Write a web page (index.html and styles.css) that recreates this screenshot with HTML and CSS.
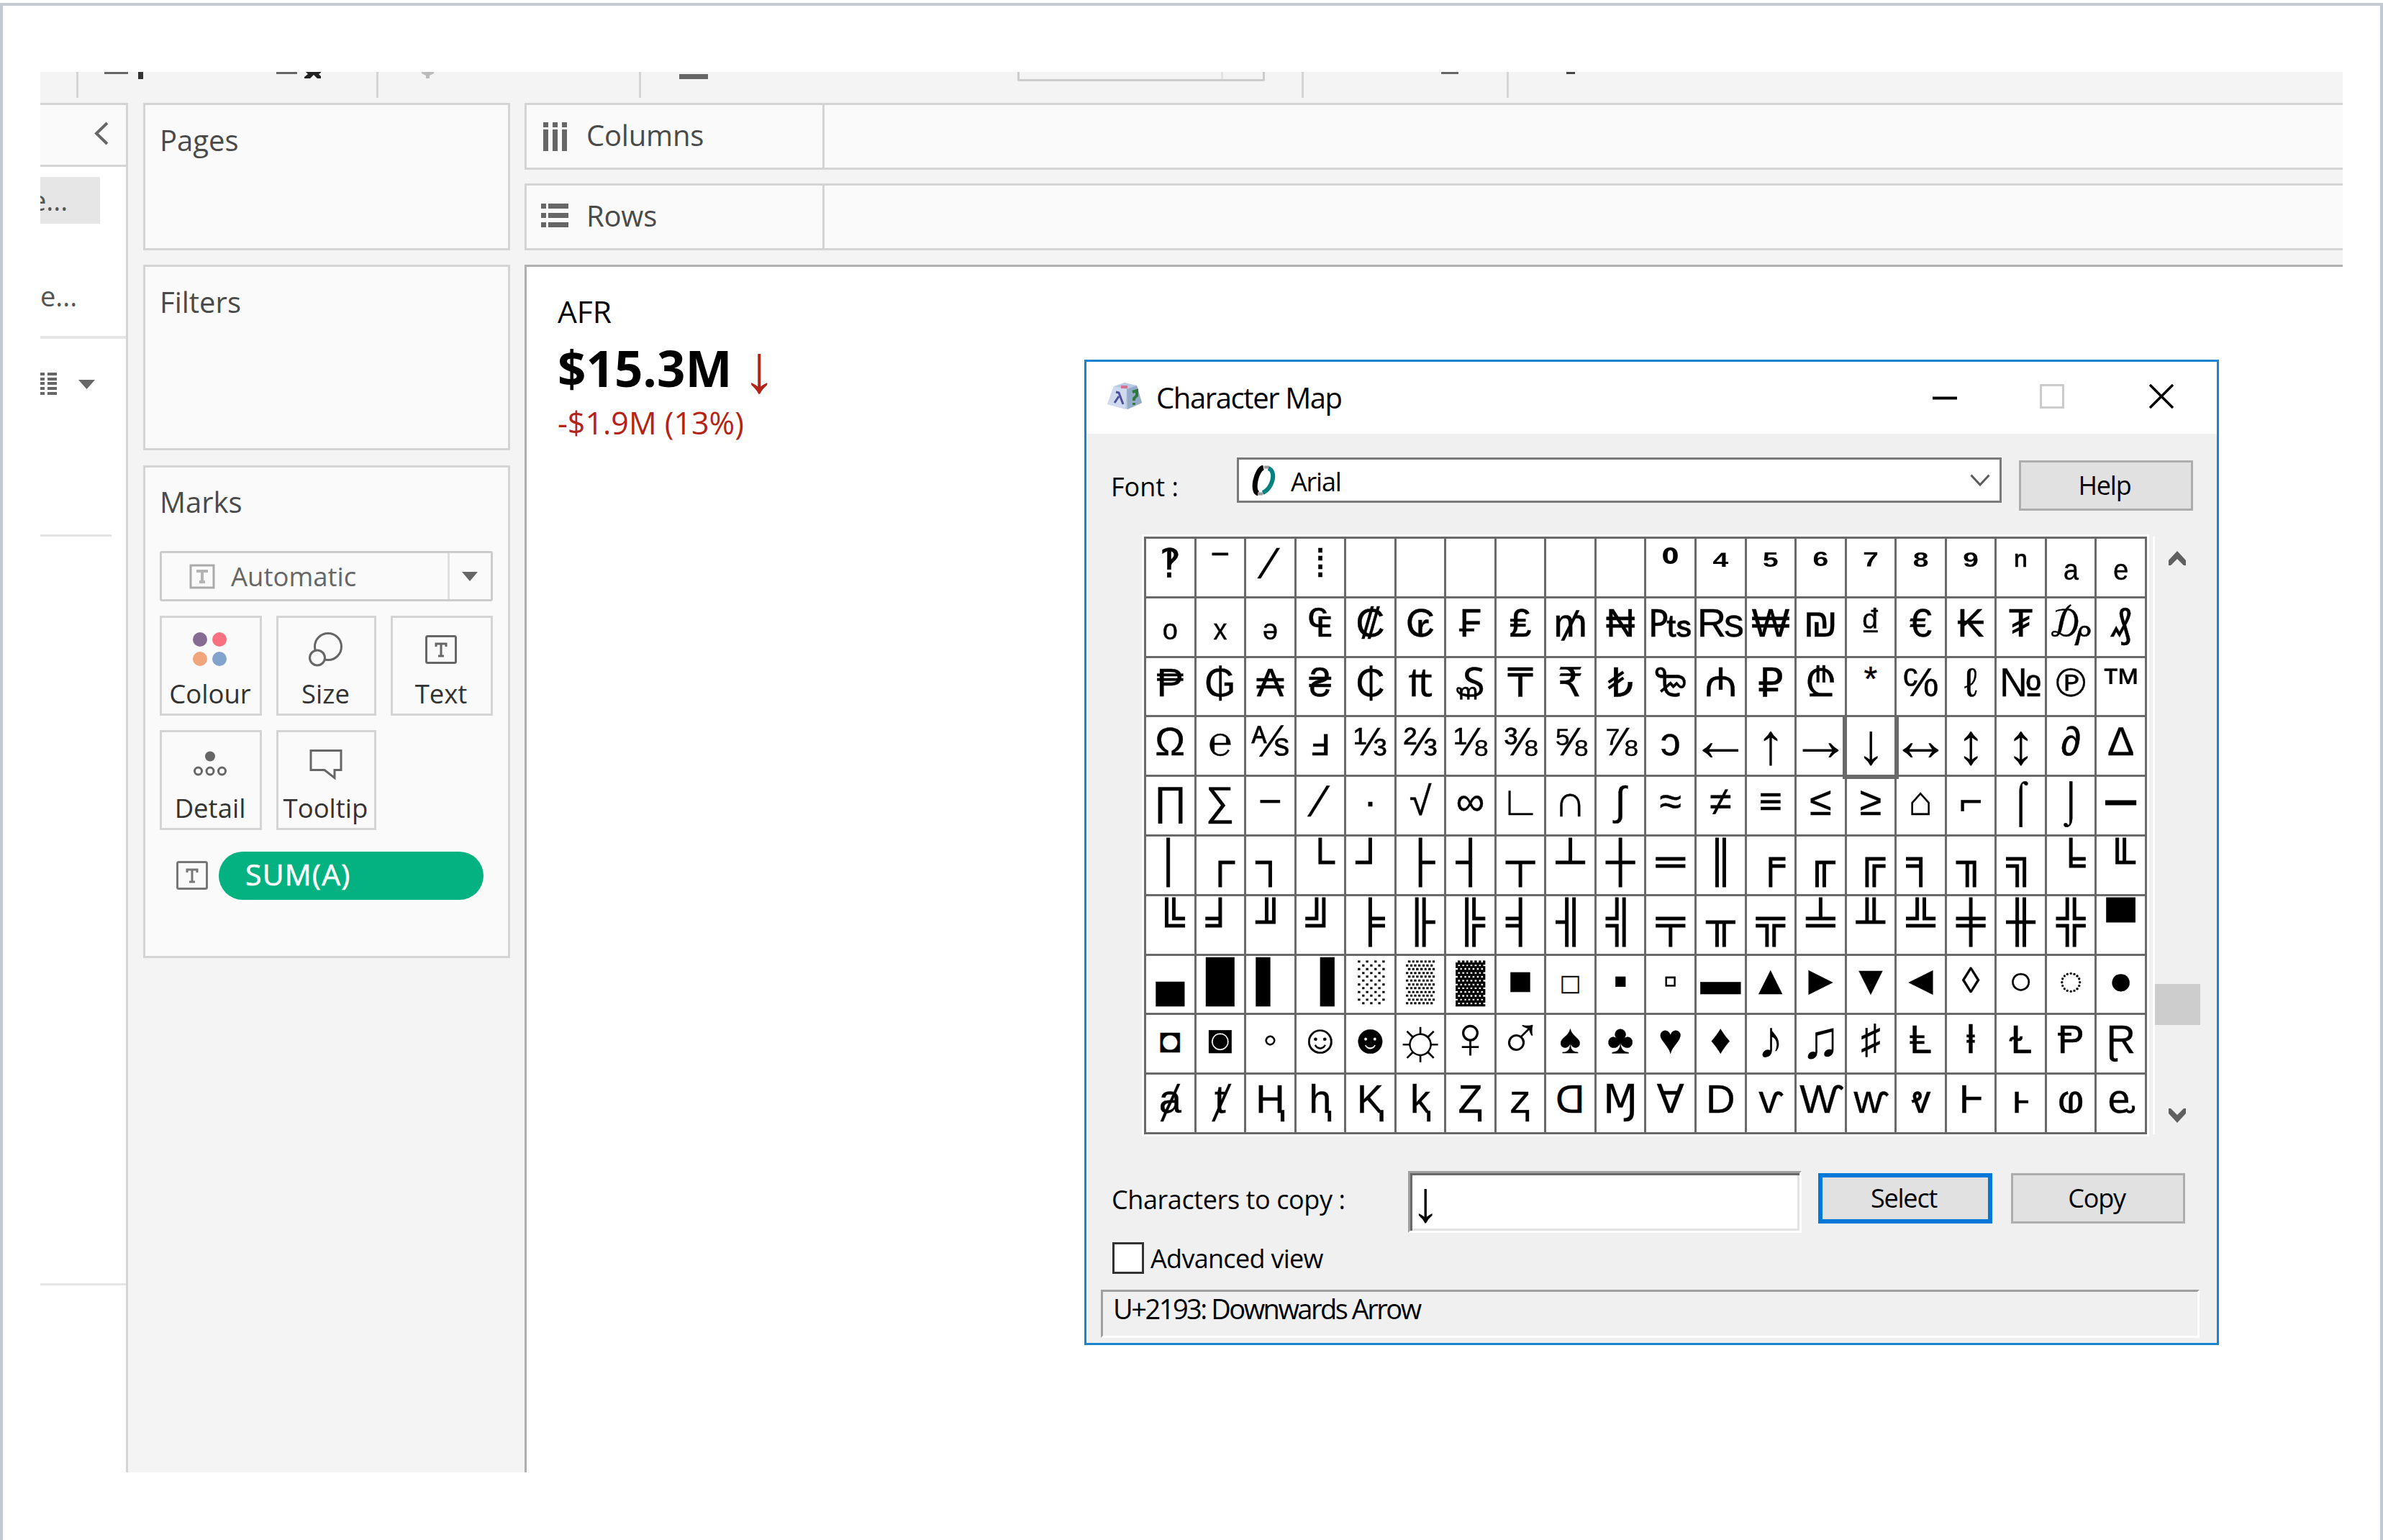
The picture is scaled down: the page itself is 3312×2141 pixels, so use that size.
FILE: index.html
```html
<!DOCTYPE html>
<html lang="en">
<head>
<meta charset="utf-8">
<title>Worksheet with Character Map</title>
<link rel="stylesheet" href="styles.css">
</head>
<body>
<div class="frame">
<main class="app">
  <div class="toolbar">
    <i class="sep t1"></i>
    <svg class="t2" width="54" height="10"><path fill="#666" d="M0 0h33v3H0z"/><path fill="#333" d="M47 0h7v10h-7z"/></svg>
    <svg class="t3" width="62" height="10"><path fill="#666" d="M0 0h29v3H0z"/><path fill="#222" d="M41 0h21v1l-3 2 4 4v2h-6l-5-5-5 5h-8V7l5-4z"/></svg>
    <i class="sep t4"></i>
    <svg class="t5" width="17" height="9"><path fill="#bbb" d="M0 0h17v2l-6 3v4H6V5L0 2z"/></svg>
    <i class="sep t6"></i>
    <i class="dash t7"></i>
    <div class="tb-select t8"></div>
    <i class="sep t9"></i>
    <i class="stub t10"></i>
    <i class="sep t11"></i>
    <i class="stub dark t12"></i>
  </div>
  <div class="work">
    <aside class="data">
      <div class="data-head"><svg width="22" height="33"><path d="M19 2 4 16.500 19 31" fill="none" stroke="#666" stroke-width="4"/></svg></div>
      <div class="source selected"><span>e...</span></div>
      <div class="source"><span>e...</span></div>
      <div class="tools">
        <svg width="77" height="31"><g fill="#666"><path d="M0 0h6v4H0zM0 7h6v4H0zM0 13h6v4H0zM0 20h6v4H0zM0 27h6v4H0zM10 0h13v4H10zM10 7h13v4H10zM10 13h13v4H10zM10 20h13v4H10zM10 27h13v4H10zM53 10h23L64.500 23z"/></g></svg>
      </div>
      <div class="fields"></div>
      <div class="params"></div>
    </aside>
    <section class="shelves">
      <div class="card pages">Pages</div>
      <div class="card filters">Filters</div>
      <div class="card marks">
        <div class="marks-title">Marks</div>
        <div class="mark-type">
          <svg width="38" height="35" viewBox="0 0 38 35"><path d="M3 2h32v31H3z" fill="none" stroke="#aaa" stroke-width="3"/><path d="M11 10h16M19 10v15M15 25h8" stroke="#b4b4b4" stroke-width="4" fill="none"/></svg>
          <span>Automatic</span>
          <b><svg width="22" height="13"><path d="M0 0h22L11 13z" fill="#666"/></svg></b>
        </div>
        <div class="tiles">
          <div class="tile"><svg width="48" height="48"><circle cx="10" cy="10" r="10" fill="#866c93"/><circle cx="37" cy="10" r="10" fill="#f97080"/><circle cx="10" cy="37" r="10" fill="#f2a47b"/><circle cx="37" cy="37" r="10" fill="#82a3cb"/></svg><span>Colour</span></div>
          <div class="tile"><svg width="48" height="48" fill="none" stroke="#666" stroke-width="3"><circle cx="27" cy="20" r="18.500"/><circle cx="12" cy="35.500" r="10.500" fill="#fafafa"/></svg><span>Size</span></div>
          <div class="tile"><svg width="44" height="48"><rect x="1.500" y="5.500" width="41" height="37" rx="2" fill="none" stroke="#666" stroke-width="3"/><path d="M15 20v-4h14v4M22 16v17M18 33h8" fill="none" stroke="#666" stroke-width="3"/></svg><span>Text</span></div>
          <div class="tile"><svg width="48" height="48" fill="none" stroke="#666" stroke-width="3"><circle cx="24" cy="13.500" r="7" fill="#666" stroke="none"/><circle cx="7.500" cy="34" r="5"/><circle cx="24" cy="34" r="5"/><circle cx="40.500" cy="34" r="5"/></svg><span>Detail</span></div>
          <div class="tile"><svg width="48" height="48"><path d="M3 5.500h42v27H36v11L22 32.500H3z" fill="none" stroke="#666" stroke-width="3"/></svg><span>Tooltip</span></div>
        </div>
        <div class="pill-row">
          <svg width="44" height="41"><rect x="1.500" y="1.500" width="41" height="37" rx="2" fill="none" stroke="#777" stroke-width="3"/><path d="M15 16v-4h14v4M22 12v17M18 29h8" fill="none" stroke="#777" stroke-width="3"/></svg>
          <span class="pill">SUM(A)</span>
        </div>
      </div>
    </section>
    <section class="view">
      <div class="shelf"><div class="shelf-name"><svg width="40" height="40"><path fill="#666" d="M4 0h7v7H4zM17 0h7v7h-7zM30 0h7v7h-7zM4 10h7v30H4zM17 10h7v30h-7zM30 10h7v30h-7z"/></svg><span>Columns</span></div></div>
      <div class="shelf"><div class="shelf-name"><svg width="40" height="40"><path fill="#666" d="M1 1h7v7H1zM1 14h7v7H1zM1 27h7v7H1zM11 1h28v7H11zM11 14h28v7H11zM11 27h28v7H11z"/></svg><span>Rows</span></div></div>
      <div class="sheet">
        <div class="kpi-name">AFR</div>
        <div class="kpi-value">$15.3M<span class="kpi-arrow">↓</span></div>
        <div class="kpi-delta">-$1.9M (13%)</div>
      </div>
    </section>
  </div>

  <div class="dialog">
    <header class="titlebar">
      <svg class="app-icon" width="48" height="38" viewBox="0 0 48 38"><path d="M9 5 24 0l17 4 7 24-20 9L0 30z" fill="#b9c9e2"/><path d="M9 5 27 9 25 37 0 30z" fill="#cfdaee"/><path d="M27 9l14-5 7 24-20 9z" fill="#93abc9"/><path d="M19 4h9v4h-9z" fill="#d0708c"/><path d="M12 13l4 1 6 16M16 19l-6 9" stroke="#4b4f9e" stroke-width="3" fill="none"/><path d="M35 13l6-2v7l-4 4v3M37 28v3" stroke="#2c7a3c" stroke-width="4" fill="none"/></svg>
      <h1>Character Map</h1>
      <div class="window-buttons">
        <svg width="34" height="34"><path d="M0 19.500h34" stroke="#000" stroke-width="4"/></svg>
        <svg width="34" height="34"><path d="M1.500 1.500h31v31h-31z" fill="none" stroke="#ccc" stroke-width="3"/></svg>
        <svg width="34" height="34"><path d="M1 1l32 32M33 1 1 33" stroke="#000" stroke-width="3.500"/></svg>
      </div>
    </header>
    <div class="font-row">
      <label>Font :</label>
      <div class="combo"><svg width="38" height="42" viewBox="0 0 38 42"><path d="M17 3C7 5 0 37 10 39" fill="none" stroke="#000" stroke-width="7"/><path d="M9 39.500h7M18 2.500h7" stroke="#999" stroke-width="4"/><path d="M24 4c12 5 5 29-8 34" fill="none" stroke="#008080" stroke-width="6"/></svg><span>Arial</span><svg class="chev" width="28" height="18"><path d="M1.500 1.500 14 15 26.500 1.500" fill="none" stroke="#5c5c5c" stroke-width="3"/></svg></div>
      <button class="btn">Help</button>
    </div>
    <div class="map-row">
      <div class="grid">
        <span>‽</span><span class="overline">‾</span><span class="slash">⁄</span><span>⁞</span><span></span><span></span><span></span><span></span><span></span><span></span><span class="sup">⁰</span><span class="sup">⁴</span><span class="sup">⁵</span><span class="sup">⁶</span><span class="sup">⁷</span><span class="sup">⁸</span><span class="sup">⁹</span><span>ⁿ</span><span>ₐ</span><span>ₑ</span>
        <span>ₒ</span><span>ₓ</span><span>ₔ</span><span>₠</span><span>₡</span><span>₢</span><span>₣</span><span>₤</span><span>₥</span><span>₦</span><span>₧</span><span>₨</span><span>₩</span><span>₪</span><span>₫</span><span>€</span><span>₭</span><span>₮</span><span>₯</span><span>₰</span>
        <span>₱</span><span>₲</span><span>₳</span><span>₴</span><span>₵</span><span>₶</span><span>₷</span><span>₸</span><span>₹</span><span>₺</span><span>₻</span><span>₼</span><span>₽</span><span>₾</span><span class="star">*</span><span>℅</span><span>ℓ</span><span>№</span><span>℗</span><span>™</span>
        <span>Ω</span><span>℮</span><span>⅍</span><span>ⅎ</span><span>⅓</span><span>⅔</span><span>⅛</span><span>⅜</span><span>⅝</span><span>⅞</span><span>ↄ</span><span class="harrow">←</span><span class="varrow">↑</span><span class="harrow">→</span><span class="varrow current">↓</span><span class="harrow">↔</span><span class="varrow">↕</span><span class="varrow">↕</span><span>∂</span><span>∆</span>
        <span>∏</span><span>∑</span><span>−</span><span class="slash">∕</span><span>∙</span><span>√</span><span>∞</span><span>∟</span><span class="wide">∩</span><span>∫</span><span>≈</span><span>≠</span><span>≡</span><span>≤</span><span>≥</span><span>⌂</span><span>⌐</span><span>⌠</span><span>⌡</span><span class="heavy">─</span>
        <span class="line">│</span><span class="line">┌</span><span class="line">┐</span><span class="line">└</span><span class="line">┘</span><span class="line">├</span><span class="line">┤</span><span class="line">┬</span><span class="line">┴</span><span class="line">┼</span><span class="line">═</span><span class="line">║</span><span class="line">╒</span><span class="line">╓</span><span class="line">╔</span><span class="line">╕</span><span class="line">╖</span><span class="line">╗</span><span class="line">╘</span><span class="line">╙</span>
        <span class="line">╚</span><span class="line">╛</span><span class="line">╜</span><span class="line">╝</span><span class="line">╞</span><span class="line">╟</span><span class="line">╠</span><span class="line">╡</span><span class="line">╢</span><span class="line">╣</span><span class="line">╤</span><span class="line">╥</span><span class="line">╦</span><span class="line">╧</span><span class="line">╨</span><span class="line">╩</span><span class="line">╪</span><span class="line">╫</span><span class="line">╬</span><span class="line">▀</span>
        <span>▄</span><span>█</span><span>▌</span><span>▐</span><span>░</span><span>▒</span><span>▓</span><span>■</span><span class="small">□</span><span>▪</span><span>▫</span><span>▬</span><span>▲</span><span>►</span><span>▼</span><span>◄</span><span class="lozenge">◊</span><span>○</span><span>◌</span><span>●</span>
        <span class="inverse">◘</span><span>◙</span><span>◦</span><span>☺</span><span>☻</span><span class="sign">☼</span><span class="sign">♀</span><span class="sign">♂</span><span>♠</span><span>♣</span><span>♥</span><span>♦</span><span class="note">♪</span><span class="note">♫</span><span>♯</span><span>Ⱡ</span><span>ⱡ</span><span>Ɫ</span><span>Ᵽ</span><span>Ɽ</span>
        <span>ⱥ</span><span>ⱦ</span><span>Ⱨ</span><span>ⱨ</span><span>Ⱪ</span><span>ⱪ</span><span>Ⱬ</span><span>ⱬ</span><span class="turned"><b>D</b></span><span>Ɱ</span><span>Ɐ</span><span>D</span><span>ⱱ</span><span>Ⱳ</span><span>ⱳ</span><span>ⱴ</span><span>Ⱶ</span><span>ⱶ</span><span>ⱷ</span><span>ⱸ</span>
      </div>
      <div class="scroll">
        <svg width="24" height="20"><path d="M12 0 24 13v7h-3l-9-9-9 9H0v-7z" fill="#606060"/></svg>
        <i class="thumb"></i>
        <svg width="24" height="20"><path d="M12 20 24 7V0h-3l-9 9-9-9H0v7z" fill="#606060"/></svg>
      </div>
    </div>
    <div class="copy-row">
      <label>Characters to copy :</label>
      <div class="input">↓</div>
      <button class="btn primary">Select</button>
      <button class="btn">Copy</button>
    </div>
    <div class="check-row"><i class="box"></i><span>Advanced view</span></div>
    <footer class="status">U+2193: Downwards Arrow</footer>
  </div>
</main>
</div>
</body>
</html>
```
FILE: styles.css
```css
* { box-sizing: border-box; }
body {
  margin: 0;
  padding-top: 4px;
  background: #fff;
  font-family: "Open Sans", "Noto Sans", sans-serif;
  color: #444;
}
svg { display: block; flex: none; }
i { display: block; flex: none; font-style: normal; }
.frame {
  height: 2137px;
  border: 4px solid #c5c9d2;
  border-bottom: 0;
  padding: 92px 0 0 52px;
  overflow: hidden;
}
.app {
  position: relative;
  width: 3200px;
  height: 1947px;
  background: #f4f4f4;
  overflow: hidden;
}

/* toolbar remnants */
.toolbar { display: flex; align-items: flex-start; height: 43px; }
.sep { width: 3px; height: 36px; background: #d4d4d4; }
.dash { width: 40px; height: 7px; margin-top: 3px; background: #666; }
.stub { width: 24px; height: 3px; background: #666; }
.stub.dark { width: 12px; background: #444; }
.tb-select {
  width: 344px; height: 13px;
  border: 3px solid #ccc; border-top: 0; border-radius: 0 0 3px 3px;
  background: linear-gradient(#e4e4e4, #e4e4e4) 280px 0 / 3px 10px no-repeat;
}
.t1 { margin-left: 50px; }
.t2 { margin-left: 36px; }
.t3 { margin-left: 185px; }
.t4 { margin-left: 77px; }
.t5 { margin-left: 60px; }
.t6 { margin-left: 285px; }
.t7 { margin-left: 53px; }
.t8 { margin-left: 430px; }
.t9 { margin-left: 51px; }
.t10 { margin-left: 191px; }
.t11 { margin-left: 67px; }
.t12 { margin-left: 80px; }

.work { display: flex; height: 1904px; }

/* data pane */
.data {
  width: 122px; flex: none;
  border-right: 3px solid #d4d4d4;
  border-top: 3px solid #d4d4d4;
  background: #fff;
}
.data-head {
  height: 86px; padding: 23px 0 0 74px;
  border-bottom: 3px solid #d4d4d4;
  background: #fafafa;
}
.source { width: 83px; height: 65px; font-size: 38px; line-height: 65px; color: #555; }
.source.selected { margin: 14px 0 68px; background: #e6e6e6; }
.source.selected span { margin-left: -13px; }
.tools { margin-top: 23px; height: 145px; padding-top: 47px; border-top: 4px solid #e6e6e6; }
.fields { width: 99px; margin-top: 131px; height: 3px; background: #e2e2e2; }
.params { margin-top: 1038px; height: 3px; background: #e6e6e6; }

/* Pages, Filters, Marks */
.shelves { width: 551px; flex: none; padding: 0 20px 0 21px; }
.card { border: 3px solid #d4d4d4; background: #fafafa; font-size: 40px; line-height: 56px; padding: 21px 0 0 20px; color: #4a4a4a; }
.pages { height: 205px; }
.filters { height: 258px; margin-top: 20px; }
.marks { height: 685px; margin-top: 21px; padding-top: 20px; }
.mark-type {
  display: flex; align-items: center;
  width: 463px; height: 70px; margin-top: 40px; padding-left: 37px;
  border: 3px solid #ccc; border-radius: 3px;
  font-size: 36.5px; color: #666;
}
.mark-type span { margin-left: 21px; flex: 1; line-height: 50px; }
.mark-type b { display: flex; align-items: center; padding-left: 17px; width: 60px; height: 64px; border-left: 3px solid #e0e0e0; }
.tiles {
  display: grid; grid-template-columns: 142px 139px 142px; grid-auto-rows: 139px;
  gap: 20px; margin-top: 20px;
}
.tile { display: flex; flex-direction: column; align-items: center; padding: 20px 2px 0 0; border: 3px solid #d4d4d4; font-size: 36.5px; line-height: 50px; color: #333; }
.tile span { margin-top: 12px; }
.pill-row { display: flex; align-items: center; margin: 30px 0 0 23px; }
.pill {
  width: 368px; height: 67px; margin-left: 15px; padding-left: 37px;
  border-radius: 34px; background: #04b180; color: #fff;
  font-size: 41px; line-height: 63px; letter-spacing: 1.2px;
  -webkit-text-stroke: .6px #fff;
}

/* sheet */
.view { flex: 1; display: flex; flex-direction: column; }
.shelf { height: 93px; margin-bottom: 19px; border: 3px solid #d4d4d4; border-right: 0; background: #fafafa; }
.shelf + .shelf { margin-bottom: 20px; }
.shelf-name { display: flex; align-items: center; width: 414px; height: 87px; padding-left: 19px; border-right: 3px solid #d4d4d4; font-size: 40px; letter-spacing: -.2px; color: #4a4a4a; }
.shelf-name span { margin: -4px 0 0 24px; line-height: 56px; }
.sheet { flex: 1; border: solid #b0b0b0; border-width: 3px 0 0 3px; background: #fff; padding: 34px 0 0 43px; color: #000; }
.kpi-name { font-size: 42.5px; line-height: 56px; }
.kpi-value { display: flex; height: 90px; font-size: 69px; font-weight: 700; line-height: 90px; margin-top: 5px; }
.kpi-arrow { font-family: "Liberation Sans", sans-serif; font-weight: 400; font-size: 94px; color: #b42318; margin: 2px 0 0 14px; }
.kpi-delta { font-size: 43px; line-height: 56px; color: #b42318; margin-top: 4px; }

/* Character Map window */
.dialog {
  position: absolute; left: 1451px; top: 400px;
  width: 1577px; height: 1370px;
  border: 3px solid #1883cf;
  background: #f0f0f0;
  color: #000;
  font-size: 36px;
}
.titlebar { display: flex; align-items: center; height: 100px; padding: 0 60px 5px 29px; background: #fff; }
.titlebar h1 { margin: 3px 0 0 20px; flex: 1; font-size: 40px; font-weight: 400; letter-spacing: -1.4px; }
.window-buttons { display: flex; }
.window-buttons svg + svg { margin-left: 115px; }
.window-buttons svg:last-child { margin-left: 118px; }
.btn {
  display: block; padding: 0 4px 0 0; width: 242px; height: 70px;
  border: 3px solid #adadad; background: #e1e1e1;
  font: 36px/62px "Open Sans", sans-serif; letter-spacing: -1.2px; color: #000; text-align: center;
}
.btn.primary { border: 6px solid #0078d7; }
.font-row { display: flex; padding: 33px 0 0 34px; height: 140px; }
.font-row label { width: 175px; line-height: 82px; }
.combo {
  display: flex; align-items: center; width: 1063px; height: 63px; padding: 0 13px 0 17px;
  border: 3px solid #7a7a7a; background: #fff; letter-spacing: -1.2px;
}
.combo span { margin: 3px 0 0 17px; flex: 1; line-height: 57px; }
.font-row .btn { margin: 4px 0 0 24px; }

.map-row { display: flex; padding-left: 77px; }
.grid {
  display: grid; grid-template-columns: repeat(20, 69.55px); grid-template-rows: repeat(10, 82.8px);
  width: 1400px; height: 837px;
  border: 3px solid #fff;
  background: #fff;
  padding: 3px;
  font-family: "Liberation Sans", "DejaVu Sans", sans-serif;
  font-size: 56px; line-height: 68px; text-align: center;
  box-shadow: inset 3px 3px 0 #696969;
  -webkit-text-stroke: .4px #000;
}
.grid span {
  display: flex; justify-content: center; white-space: nowrap;
  border: solid #696969; border-width: 0 3px 3px 0;
}
.grid .current { box-shadow: 0 0 0 3px #696969; margin-left: -3px; border-left: 3px solid #696969; z-index: 1; }
.grid .overline { line-height: 90px; }
.grid .slash { font-size: 62px; line-height: 68px; }
.grid .sup { font-weight: 700; -webkit-text-stroke: 0; }
.grid .star { font-size: 48px; line-height: 58px; }
.grid .harrow { font-size: 84px; line-height: 62px; -webkit-text-stroke: 0; }
.grid .varrow { font-size: 80px; line-height: 76px; -webkit-text-stroke: 0; }
.grid .wide { font-size: 62px; }
.grid .line { -webkit-text-stroke: 1px #000; }
.grid .heavy { -webkit-text-stroke: 3px #000; }
.grid .small { font-size: 40px; line-height: 76px; }
.grid .lozenge { font-size: 50px; }
.grid .inverse { font-size: 48px; line-height: 72px; }
.grid .sign { font-size: 82px; line-height: 64px; -webkit-text-stroke: 0; }
.grid .note { font-size: 74px; line-height: 70px; -webkit-text-stroke: 0; }
.grid .turned b { font-weight: 400; transform: scaleX(-1); }
.scroll { width: 70px; height: 831px; margin: 3px 0 0 5px; padding-top: 20px; border-left: 3px solid #fff; display: flex; flex-direction: column; }
.scroll svg { margin-left: 19px; }
.thumb { width: 63px; height: 57px; background: #cdcdcd; margin: 582px 0 116px; }

.copy-row { display: flex; padding: 48px 0 0 35px; height: 137px; }
.copy-row label { width: 412px; line-height: 79px; letter-spacing: -.4px; }
.input {
  width: 547px; height: 86px; padding-left: 1px;
  border: 3px solid; border-color: #a0a0a0 #fff #fff #a0a0a0;
  box-shadow: inset 3px 3px 0 #696969, inset -3px -3px 0 #e3e3e3;
  background: #fff;
  font: 80px/79px "Liberation Sans", sans-serif;
}
.copy-row .btn { margin: 3px 0 0 23px; }
.copy-row .primary + .btn { margin-left: 26px; }
.btn.primary { line-height: 56px; }
.check-row { display: flex; align-items: center; height: 44px; margin: 10px 0 0 36px; letter-spacing: -.7px; }
.box { width: 44px; height: 44px; border: 3px solid #333; background: #fff; margin-right: 9px; }
.status {
  width: 1527px; height: 67px; margin: 22px 0 0 20px; padding-left: 14px;
  border: 3px solid; border-color: #a0a0a0 #fff #fff #a0a0a0;
  font-size: 38px; line-height: 46px; letter-spacing: -2.5px;
}
```
